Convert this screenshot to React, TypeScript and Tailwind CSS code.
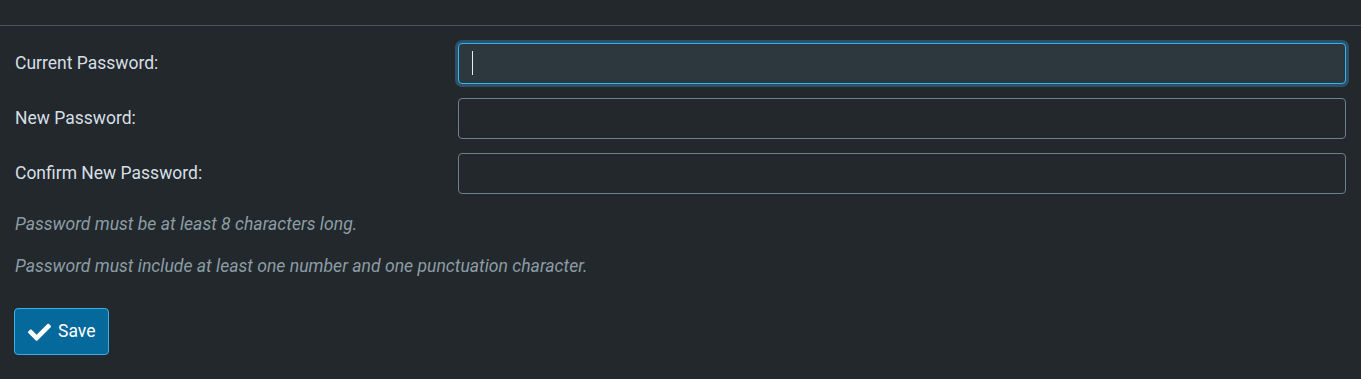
import { useRef, useEffect } from 'react';

const fields = [
  { id: 'current', label: 'Current Password:' },
  { id: 'new', label: 'New Password:' },
  { id: 'confirm', label: 'Confirm New Password:' },
];

function CheckIcon() {
  return (
    <svg viewBox="0 0 512 400" className="w-[23px] h-[18px]" fill="currentColor">
      <path d="M173.9 389.4l-166.4-166.4c-10-10-10-26.2 0-36.2l36.2-36.2c10-10 26.2-10 36.2 0L192 262.7 432.1 22.6c10-10 26.2-10 36.2 0l36.2 36.2c10 10 10 26.2 0 36.2l-294.4 294.4c-10 10-26.2 10-36.2 0z" />
    </svg>
  );
}

export default function App() {
  const firstRef = useRef<HTMLInputElement>(null);

  useEffect(() => {
    firstRef.current?.focus();
  }, []);

  return (
    <div
      className="min-h-[379px] w-full bg-[#22282c] text-[#d6dfe4]"
      style={{ fontFamily: 'Roboto, "Liberation Sans", sans-serif' }}
    >
      <div className="h-[26px] border-b border-[#4b5458]" />

      <form className="px-[15px] pt-[17px]" onSubmit={(e) => e.preventDefault()}>
        <div className="flex flex-col gap-[14px]">
          {fields.map((f, i) => (
            <div key={f.id} className="grid grid-cols-[443px_1fr] items-center">
              <label htmlFor={f.id} className="pb-[2px] text-[17.5px] leading-6">
                {f.label}
              </label>
              <div className="relative">
                <input
                  id={f.id}
                  ref={i === 0 ? firstRef : undefined}
                  type="password"
                  className="h-[41px] w-full rounded-[4px] border border-[#6f8086] bg-[#22282c] px-3 text-base text-[#e6ecef] caret-transparent outline-none focus:border-[#33b3f2] focus:bg-[#2d383e] focus:shadow-[0_0_0_3px_#2a5269]"
                />
                {i === 0 && (
                  <span className="pointer-events-none absolute left-[14px] top-[8px] h-[24px] w-px bg-[#e6ecef]" />
                )}
              </div>
            </div>
          ))}
        </div>

        <p className="mt-[18px] text-[17.6px] italic leading-6 text-[#8c9da5]">
          Password must be at least 8 characters long.
        </p>
        <p className="mt-[18px] text-[17.6px] italic leading-6 text-[#8c9da5]">
          Password must include at least one number and one punctuation character.
        </p>

        <button
          type="submit"
          className="mt-[30px] ml-[-1px] flex h-[47px] w-[95px] items-center gap-[7px] rounded-[4px] border border-[#3aaee6] bg-[#06699c] pl-[13px] text-[17.5px] text-white"
        >
          <CheckIcon />
          <span>Save</span>
        </button>
      </form>
    </div>
  );
}
